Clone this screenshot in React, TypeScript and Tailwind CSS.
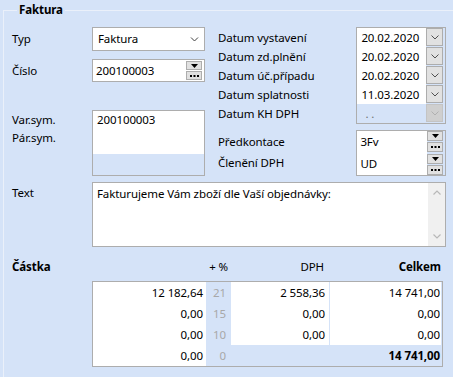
import React from "react";

const Chevron = ({ color = "#505050", w = 8 }: { color?: string; w?: number }) => (
  <svg width={w} height={5} viewBox="0 0 8 5">
    <path d="M0.5 0.5 L4 4 L7.5 0.5" fill="none" stroke={color} strokeWidth="1" />
  </svg>
);

const ChevronUp = () => (
  <svg width={8} height={5} viewBox="0 0 8 5">
    <path d="M0.5 4.5 L4 1 L7.5 4.5" fill="none" stroke="#b8b8b8" strokeWidth="1.2" />
  </svg>
);

const Tri = () => (
  <svg width={7} height={4} viewBox="0 0 7 4">
    <path d="M0 0 H7 L3.5 4 Z" fill="#000" />
  </svg>
);

const Dots = () => (
  <svg width={9} height={2} viewBox="0 0 9 2">
    <rect x="0" y="0" width="2" height="2" fill="#000" />
    <rect x="3.5" y="0" width="2" height="2" fill="#000" />
    <rect x="7" y="0" width="2" height="2" fill="#000" />
  </svg>
);

// dvojité tlačítko (výběr + seznam)
const PickButtons = ({ h = 10 }: { h?: number }) => (
  <div className="flex flex-col gap-px w-[16px]">
    <div className="border border-[#adadad] bg-[#e1e1e1] flex items-center justify-center" style={{ height: h }}>
      <Tri />
    </div>
    <div className="border border-[#adadad] bg-[#e1e1e1] flex items-center justify-center" style={{ height: h }}>
      <Dots />
    </div>
  </div>
);

const dates = [
  { label: "Datum vystavení", value: "20.02.2020" },
  { label: "Datum zd.plnění", value: "20.02.2020" },
  { label: "Datum úč.případu", value: "20.02.2020" },
  { label: "Datum splatnosti", value: "11.03.2020" },
];

const rows = [
  { base: "12 182,64", pct: "21", dph: "2 558,36", total: "14 741,00" },
  { base: "0,00", pct: "15", dph: "0,00", total: "0,00" },
  { base: "0,00", pct: "10", dph: "0,00", total: "0,00" },
];

export default function App() {
  return (
    <div className="w-[453px] h-[377px] overflow-hidden bg-[#d5e3f8] pt-[2px] text-[11.5px] tracking-[-0.1px] text-black font-['Noto_Sans',sans-serif]">
      <fieldset className="ml-[3px] border-t border-l border-[#eaf0fa] pl-[8px]">
        <legend className="ml-[5px] px-[2px] font-bold leading-[16px]">Faktura</legend>

        {/* Horní část */}
        <div className="flex mt-[9px]">
          {/* levý sloupec */}
          <div className="w-[194px]">
            <div className="flex items-center h-[24px]">
              <div className="w-[80px]">Typ</div>
              <div className="w-[113px] h-[24px] bg-white border border-[#adadad] flex items-center justify-between pl-[5px] pr-[5px]">
                <span>Faktura</span>
                <Chevron color="#404040" w={9} />
              </div>
            </div>
            <div className="flex items-center h-[23px] mt-[8px]">
              <div className="w-[80px]">Číslo</div>
              <div className="w-[113px] h-[23px] bg-white border border-[#adadad] flex items-center justify-between pl-[3px] pr-[2px]">
                <span>200100003</span>
                <PickButtons h={9} />
              </div>
            </div>
            <div className="flex mt-[28px]">
              <div className="w-[80px] pt-[1px] leading-[18px]">
                <div>Var.sym.</div>
                <div>Pár.sym.</div>
              </div>
              <div className="w-[113px] h-[66px] border border-[#adadad] flex flex-col">
                <div className="h-[43px] bg-white pl-[4px] pt-[1px] leading-[16px]">200100003</div>
              </div>
            </div>
          </div>

          {/* pravý sloupec */}
          <div className="ml-[12px] w-[228px]">
            <div className="flex">
              <div className="w-[139px] pt-[1px] leading-[19px]">
                {dates.map((d) => (
                  <div key={d.label} className="h-[19px]">{d.label}</div>
                ))}
                <div className="h-[19px]">Datum KH DPH</div>
              </div>
              <div className="w-[90px] border border-[#adadad] pr-[2px]">
                {dates.map((d) => (
                  <div key={d.label} className="flex h-[19px]">
                    <div className="flex-1 bg-white pl-[4px] leading-[19px]">{d.value}</div>
                    <div className="w-[17px] h-[18px] border border-[#adadad] bg-[#e1e1e1] flex items-center justify-center">
                      <Chevron />
                    </div>
                  </div>
                ))}
                <div className="flex h-[19px]">
                  <div className="flex-1 pl-[8px] leading-[19px] text-[#707070]">. .</div>
                  <div className="w-[17px] h-[18px] border border-[#c4c4c4] bg-[#cfcfcf] flex items-center justify-center">
                    <Chevron color="#b0b0b0" />
                  </div>
                </div>
              </div>
            </div>

            <div className="flex mt-[6px]">
              <div className="w-[139px] pt-[1px] leading-[21px]">
                <div>Předkontace</div>
                <div>Členění DPH</div>
              </div>
              <div className="w-[90px] h-[46px] border border-[#adadad] pr-[2px]">
                <div className="flex h-[22px]">
                  <div className="flex-1 bg-white pl-[3px] leading-[22px]">3Fv</div>
                  <PickButtons h={10} />
                </div>
                <div className="flex h-[22px]">
                  <div className="flex-1 bg-white pl-[3px] leading-[22px]">UD</div>
                  <div className="pt-px">
                    <PickButtons h={10} />
                  </div>
                </div>
              </div>
            </div>
          </div>
        </div>

        {/* Text */}
        <div className="flex mt-[6px]">
          <div className="w-[80px] pt-[2px]">Text</div>
          <div className="w-[354px] h-[65px] border border-[#adadad] bg-white flex">
            <div className="flex-1 pl-[4px] pt-[3px] leading-[16px]">Fakturujeme Vám zboží dle Vaší objednávky:</div>
            <div className="w-[17px] bg-[#f0f0f0] flex flex-col items-center justify-between py-[7px]">
              <ChevronUp />
              <svg width={8} height={5} viewBox="0 0 8 5">
                <path d="M0.5 0.5 L4 4 L7.5 0.5" fill="none" stroke="#b8b8b8" strokeWidth="1.2" />
              </svg>
            </div>
          </div>
        </div>

        {/* Částka */}
        <div className="flex mt-[12px] leading-[16px]">
          <div className="w-[80px] font-bold">Částka</div>
          <div className="w-[114px]" />
          <div className="w-[25px] text-right pr-[3px] whitespace-nowrap">+ %</div>
          <div className="w-[99px] text-right pr-[6px]">DPH</div>
          <div className="w-[111px] text-right font-bold">Celkem</div>
        </div>

        <div className="flex mt-[6px]">
          <div className="w-[80px]" />
          <div className="w-[351px] border border-[#adadad]">
            {rows.map((r) => (
              <div key={r.pct} className="flex h-[21px] leading-[21px]">
                <div className="w-[113px] bg-white text-right pr-[3px]">{r.base}</div>
                <div className="w-[25px] text-right pr-[5px] text-[#a8a8a8]">{r.pct}</div>
                <div className="w-[98px] bg-white text-right pr-[4px]">{r.dph}</div>
                <div className="w-px bg-[#d5e3f8]" />
                <div className="w-[111px] bg-white text-right pr-[1px]">{r.total}</div>
              </div>
            ))}
            <div className="flex h-[21px] leading-[21px]">
              <div className="w-[113px] bg-white text-right pr-[3px]">0,00</div>
              <div className="w-[25px] text-right pr-[5px] text-[#a8a8a8]">0</div>
              <div className="w-[98px]" />
              <div className="w-px" />
              <div className="w-[111px] text-right pr-[1px] font-bold">14 741,00</div>
            </div>
          </div>
        </div>
        <div className="h-[20px]" />
      </fieldset>
    </div>
  );
}
